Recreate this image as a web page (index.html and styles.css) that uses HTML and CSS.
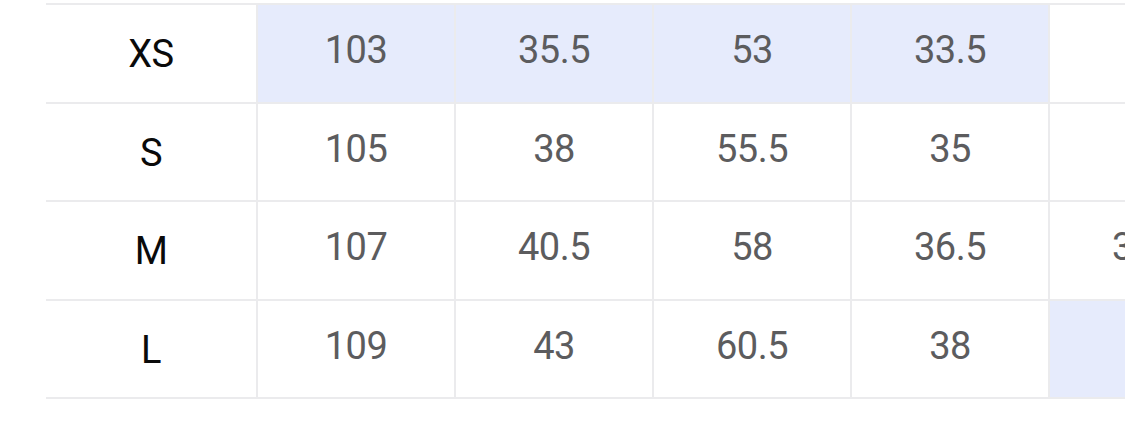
FILE: index.html
```html
<!DOCTYPE html>
<html lang="en">
<head>
<meta charset="utf-8">
<title>Size chart</title>
<link rel="stylesheet" href="styles.css">
</head>
<body>
<div class="chart">
  <div class="cell label">XS</div>
  <div class="cell num hl">103</div>
  <div class="cell num hl">35.5</div>
  <div class="cell num hl">53</div>
  <div class="cell num hl">33.5</div>
  <div class="cell num">35</div>

  <div class="cell label">S</div>
  <div class="cell num">105</div>
  <div class="cell num">38</div>
  <div class="cell num">55.5</div>
  <div class="cell num">35</div>
  <div class="cell num">36</div>

  <div class="cell label">M</div>
  <div class="cell num">107</div>
  <div class="cell num">40.5</div>
  <div class="cell num">58</div>
  <div class="cell num">36.5</div>
  <div class="cell num">37.5</div>

  <div class="cell label">L</div>
  <div class="cell num">109</div>
  <div class="cell num">43</div>
  <div class="cell num">60.5</div>
  <div class="cell num">38</div>
  <div class="cell num hl">40</div>
</div>
</body>
</html>
```

FILE: styles.css
```css
html, body {
  margin: 0;
  padding: 0;
  background: #ffffff;
  overflow: hidden;
}

body {
  width: 1125px;
  height: 446px;
  font-family: Roboto, "Liberation Sans", Arial, sans-serif;
}

.chart {
  display: grid;
  grid-template-columns: 212px repeat(5, 198px);
  grid-auto-rows: 98.5px;
  margin: 3px 0 0 46px;
  border-top: 2px solid #ebebed;
  width: max-content;
}

.cell {
  box-sizing: border-box;
  display: flex;
  align-items: center;
  justify-content: center;
  border-right: 2px solid #ebebed;
  border-bottom: 2px solid #ebebed;
  font-size: 38px;
  letter-spacing: -0.5px;
}

.label {
  color: #0a0a0a;
  font-weight: 400;
  padding-top: 2px;
}

.num {
  color: #5c5c5e;
  font-weight: 400;
  padding-bottom: 6px;
}

.hl {
  background: #e6ebfc;
}
```
